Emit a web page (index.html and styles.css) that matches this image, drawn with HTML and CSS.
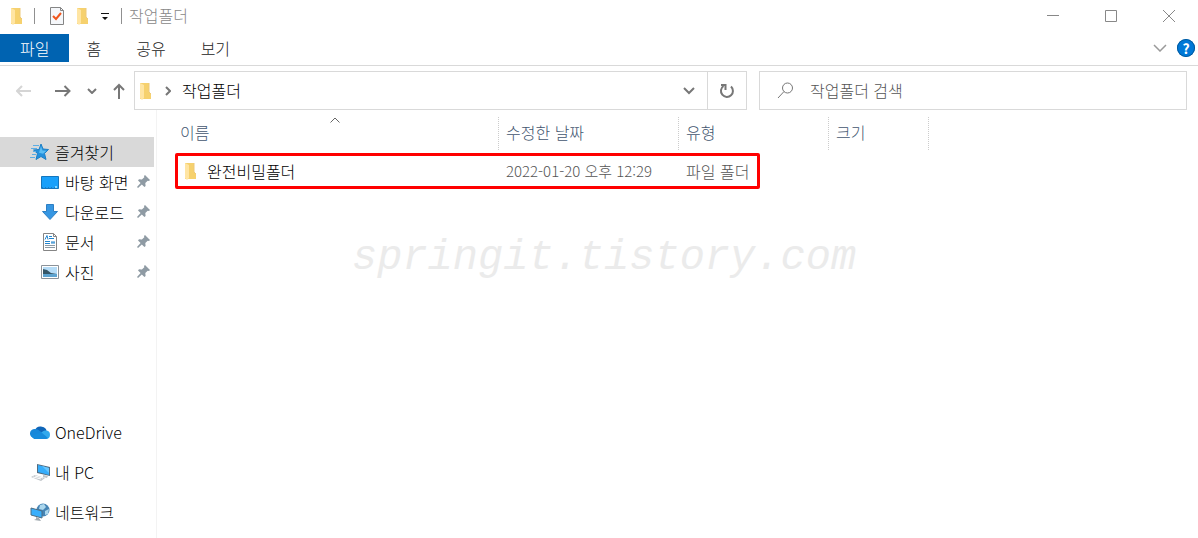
FILE: index.html
```html
<!DOCTYPE html>
<html lang="ko">
<head>
  <meta charset="UTF-8" />
  <title>작업폴더</title>
  <meta name="viewport" content="width=device-width, initial-scale=1.0" />
  <link rel="stylesheet" href="styles.css">
</head>
<body>
  <svg class="symbols" aria-hidden="true">
    <symbol id="folder" viewBox="0 0 14 18">
      <path d="M1 1h9v9l2 2v5H1z" fill="#f6d16e" />
      <path d="M1 1l4 2v13l-2 2-2-2z" fill="#ffe5a3" />
      <path d="M10 1v9l2 2" fill="none" stroke="#edc97a" />
    </symbol>
    <symbol id="pin" viewBox="0 0 13 13">
      <path d="M8 0l5 5-1 1-1.300-.3-2.400 2.400.3 2.900-1.200 1-2.600-2.600L1 13 0 12l3.600-3.900L1 5.500l1-1.200 2.900.3 2.400-2.400L7 1z" fill="#8f9ba4" />
    </symbol>
  </svg>

  <header class="titlebar">
    <svg class="folder"><use href="#folder" /></svg>
    <span class="divider first"></span>
    <button class="quick" aria-label="속성">
      <svg width="16" height="20" viewBox="0 0 16 20">
        <path d="M1.500 1.500h10l3 3v14h-13z" fill="#f5f7fa" stroke="#858585" />
        <path d="M11.500 1.500v3h3" fill="none" stroke="#858585" />
        <path d="M4 10l3 3 5-6" fill="none" stroke="#f0561d" stroke-width="2" />
      </svg>
    </button>
    <button class="quick" aria-label="새 폴더"><svg class="folder"><use href="#folder" /></svg></button>
    <button class="quick" aria-label="빠른 실행 도구 모음 사용자 지정">
      <svg width="8" height="8" viewBox="0 0 8 8"><path d="M0 1h8v1H0zM1 5h6L4 8z" fill="#111" /></svg>
    </button>
    <span class="divider"></span>
    <span class="title">작업폴더</span>
    <div class="controls">
      <button aria-label="최소화"><svg width="12" height="12" viewBox="0 0 12 12"><path d="M0 5.500h12" /></svg></button>
      <button aria-label="최대화"><svg width="12" height="12" viewBox="0 0 12 12"><path d="M.5.5h11v11H.5z" /></svg></button>
      <button aria-label="닫기"><svg width="12" height="12" viewBox="0 0 12 12"><path d="M0 0l12 12M12 0L0 12" /></svg></button>
    </div>
  </header>

  <nav class="ribbon">
    <button class="tab active">파일</button>
    <button class="tab">홈</button>
    <button class="tab">공유</button>
    <button class="tab">보기</button>
    <button class="expand" aria-label="리본 확장">
      <svg width="14" height="8" viewBox="0 0 14 8"><path d="M1 1l6 6 6-6" fill="none" stroke="#9a9a9a" stroke-width="1.500" /></svg>
    </button>
    <button class="help" aria-label="도움말">?</button>
  </nav>

  <div class="toolbar">
    <div class="history">
      <button aria-label="뒤로"><svg width="16" height="12" viewBox="0 0 16 12"><path d="M15 6H1M6 1L1 6l5 5" /></svg></button>
      <button aria-label="앞으로"><svg width="16" height="12" viewBox="0 0 16 12"><path d="M0 6h14M9.500 1l5 5-5 5" /></svg></button>
      <button aria-label="최근 위치"><svg width="10" height="6" viewBox="0 0 10 6"><path d="M1 1l4 4 4-4" /></svg></button>
      <button aria-label="위로"><svg width="12" height="16" viewBox="0 0 12 16"><path d="M6 16V2M1 7l5-5 5 5" /></svg></button>
    </div>
    <div class="address">
      <svg class="folder"><use href="#folder" /></svg>
      <svg class="arrow" width="6" height="10" viewBox="0 0 6 10"><path d="M1 1l4 4-4 4" /></svg>
      <button class="crumb">작업폴더</button>
      <button class="drop" aria-label="이전 위치"><svg width="12" height="8" viewBox="0 0 12 8"><path d="M1 1l5 5 5-5" /></svg></button>
      <button class="refresh" aria-label="새로 고침">
        <svg width="16" height="16" viewBox="0 0 16 16"><path d="M12 3.500a6 6 0 1 1-7.500-.5M2 2h4.500v5" /></svg>
      </button>
    </div>
    <div class="search">
      <label for="search" aria-label="검색">
        <svg width="17" height="17" viewBox="0 0 17 17"><circle cx="10.500" cy="6" r="5" /><path d="M7 9.500L1 16" /></svg>
      </label>
      <input type="text" id="search" placeholder="작업폴더 검색" autocomplete="off" />
    </div>
  </div>

  <div class="content">
    <aside class="sidebar">
      <a class="item selected" href="#">
        <svg class="icon" viewBox="0 0 20 18">
          <path d="M11 1l2 5 5.500.5-4 4 1.500 6-5-3-5 3 1.500-6-4-3.500 5.500-.5z" fill="#2490dc" stroke="#1d7fc6" />
          <path d="M11 3l1.500 4.500 4 .2-3.500 3-4-1z" fill="#5bbdf3" />
          <path d="M3 2.500h6M1 5.500h6M3 8.500h3M2 11.500h4M0 14.500h5" stroke="#5caee5" />
        </svg>즐겨찾기</a>
      <a class="item child" href="#">
        <svg class="icon" viewBox="0 0 20 18"><path d="M1.500 3.500h17v12h-17z" fill="#19a0fa" stroke="#1576bd" /><path d="M2 14.500h14" stroke="#1b7dc6" stroke-dasharray="1 2" /><path d="M15 13h2v2h-2z" fill="#80d4ff" /></svg>
        바탕 화면<svg class="pin"><use href="#pin" /></svg></a>
      <a class="item child" href="#">
        <svg class="icon" viewBox="0 0 20 18"><path d="M6.500 1.500h7v7h4L10 16.500 2.500 8.500h4z" fill="#3696e2" stroke="#2d7fc4" /></svg>
        다운로드<svg class="pin"><use href="#pin" /></svg></a>
      <a class="item child" href="#">
        <svg class="icon" viewBox="0 0 20 18">
          <path d="M3.500.5h10l3 3v14h-13z" fill="#fff" stroke="#858585" /><path d="M13.500.5v3h3" fill="none" stroke="#858585" />
          <path d="M5 6.500l2-4 1 4M9 3.500h3M9 5.500h5M5 8.500h5M5 10.500h5M11 10h4M11 9h4" fill="none" stroke="#2385ce" />
          <path d="M5 12.500h10M5 14.500h10" stroke="#8c9aa5" />
        </svg>
        문서<svg class="pin"><use href="#pin" /></svg></a>
      <a class="item child" href="#">
        <svg class="icon" viewBox="0 0 20 18">
          <path d="M1.500 2.500h17v13h-17z" fill="#fff" stroke="#8b9299" /><path d="M3 4h14v10H3z" fill="#b5dcf7" />
          <path d="M3 6l4 1 4 3 6 1v1H3z" fill="#355768" /><path d="M3 11h14v3H3z" fill="#5da3d0" />
        </svg>
        사진<svg class="pin"><use href="#pin" /></svg></a>

      <div class="places">
        <a class="item" href="#">
          <svg class="icon" viewBox="0 0 20 18">
            <path d="M5 7a6 5 0 0 1 11-1l1 4H5z" fill="#0f65b8" /><path d="M4 15a4 4 0 1 1 1-9c3 0 5 2 7 4l3 5z" fill="#1787d9" />
            <path d="M5 15l7-6c4-3 8-1 8 2.500S18 16 16 16z" fill="#32a9ed" /><path d="M1 13l10-4 7 6-2 1H4z" fill="#168bdc" />
          </svg>OneDrive</a>
        <a class="item" href="#">
          <svg class="icon" viewBox="0 0 20 18">
            <path d="M7 1l13 3v9L7 10z" fill="#526c80" /><path d="M8 2l11 3v7L8 9z" fill="#36adfb" /><path d="M12 2.900l7 2.100v5z" fill="#68c7ff" />
            <path d="M13 12l5 1-1 2-4-1zM1 14l4-2 10 3-4 3z" fill="#c0c5c9" /><path d="M3 14l8 2M5 13l8 2" stroke="#fff" />
          </svg>내 PC</a>
        <a class="item" href="#">
          <svg class="icon" viewBox="0 0 20 18">
            <circle cx="13" cy="7" r="6.500" fill="#4684b4" /><path d="M10 2l4-1 2 3-3 3-4-1zM15 8l4-2-1 5-3 1z" fill="#acd7ed" />
            <path d="M1 5l11 3v7L1 12z" fill="#38aefb" stroke="#4d6c81" /><path d="M6 14v2l-2 1 7 1-2-3z" fill="#a0a9af" />
          </svg>네트워크</a>
      </div>
    </aside>

    <main class="files">
      <table>
        <colgroup>
          <col class="col-name"><col class="col-date"><col class="col-type"><col class="col-size"><col>
        </colgroup>
        <thead>
          <tr>
            <th>이름<svg class="sort" width="10" height="6" viewBox="0 0 10 6"><path d="M.5 5.500L5 1l4.500 4.500" /></svg></th>
            <th>수정한 날짜</th>
            <th>유형</th>
            <th>크기</th>
            <td></td>
          </tr>
        </thead>
        <tbody>
          <tr>
            <td><span class="name"><svg class="folder"><use href="#folder" /></svg>완전비밀폴더</span></td>
            <td class="date">2022-01-20 오후 12:29</td>
            <td class="type">파일 폴더</td>
            <td></td>
            <td></td>
          </tr>
        </tbody>
      </table>
      <div class="highlight"></div>
      <div class="watermark">springit.tistory.com</div>
    </main>
  </div>
</body>
</html>
```
FILE: styles.css
```css
* {
  box-sizing: border-box;
}

body {
  margin: 0;
  min-height: 100vh;
  display: flex;
  flex-direction: column;
  background: #fff;
  color: #000;
  font-family: "Noto Sans CJK KR", sans-serif;
  font-size: 16px;
  font-weight: 300;
  line-height: 24px;
}

button {
  display: flex;
  align-items: center;
  justify-content: center;
  padding: 0;
  border: none;
  background: none;
  color: inherit;
  font: inherit;
}

svg {
  display: block;
  flex: none;
}

.symbols {
  position: absolute;
  width: 0;
  height: 0;
}

.folder {
  width: 14px;
  height: 18px;
}

.titlebar {
  display: flex;
  align-items: center;
  height: 31px;
  padding-left: 10px;
}

.divider {
  width: 1px;
  height: 16px;
  background: #909090;
}

.divider.first {
  margin: 0 2px 0 10px;
}

.quick {
  margin-left: 12px;
}

.quick + .quick {
  margin-left: 11px;
}

.quick + .divider {
  margin-left: 12px;
}

.title {
  margin-left: 7px;
  padding-bottom: 2px;
  color: #888;
}

.controls {
  display: flex;
  margin-left: auto;
}

.controls button {
  width: 58px;
  height: 30px;
}

.controls path {
  fill: none;
  stroke: #888;
}

.ribbon {
  display: flex;
  align-items: center;
  height: 35px;
  padding-top: 3px;
  padding-bottom: 3px;
  border-bottom: 1px solid #d9d9d9;
}

.tab {
  height: 28px;
  padding: 0 18px 0 17px;
  color: #222;
}

.tab.active {
  padding: 0 20px;
  background: #0063b1;
  color: #fff;
}

.expand {
  margin-left: auto;
  margin-right: 10px;
}

.help {
  width: 18px;
  height: 18px;
  margin-right: 3px;
  border-radius: 50%;
  background: #0078d7;
  box-shadow: inset 0 0 0 1px #005a9e;
  color: #fff;
  font-size: 14px;
  font-weight: 700;
}

.toolbar {
  display: flex;
  align-items: center;
  padding: 5px 11px 0 16px;
}

.toolbar path,
.toolbar circle {
  fill: none;
  stroke: #777;
  stroke-width: 2;
}

.history {
  display: flex;
  align-items: center;
  width: 118px;
}

.history button {
  margin-right: 16px;
}

.history button:first-child {
  margin-right: 23px;
}

.toolbar .history button:first-child path {
  stroke: #d5d5d5;
}

.history button:last-child {
  margin: 0;
}

.address,
.search {
  display: flex;
  align-items: center;
  height: 39px;
  border: 1px solid #d9d9d9;
}

.address {
  flex: 1;
  padding-left: 4px;
}

.arrow {
  margin: 0 11px 0 12px;
}

.crumb,
.search input {
  padding: 0 0 2px;
}

.drop {
  margin-left: auto;
  margin-right: 12px;
}

.refresh {
  width: 39px;
  height: 37px;
  border-left: 1px solid #d9d9d9;
}

.search {
  flex: 0 0 428px;
  margin-left: 12px;
  padding-left: 17px;
}

.toolbar .search path,
.toolbar .search circle {
  stroke-width: 1;
}

.search input {
  flex: 1;
  min-width: 0;
  margin-left: 16px;
  border: none;
  outline: none;
  color: #222;
  font: inherit;
}

.search input::placeholder {
  color: #555;
  opacity: 1;
}

.content {
  display: flex;
  flex: 1;
}

.sidebar {
  width: 157px;
  padding: 27px 2px 0 0;
  border-right: 1px solid #f3f3f3;
}

.item {
  display: flex;
  align-items: center;
  gap: 5px;
  height: 30px;
  padding-left: 30px;
  padding-bottom: 1px;
  color: #000;
  text-decoration: none;
}

.item.child {
  padding-left: 40px;
}

.item.selected {
  background: #d9d9d9;
}

.icon {
  width: 20px;
  height: 18px;
}

.pin {
  width: 13px;
  height: 13px;
  margin-left: auto;
  margin-right: 4px;
}

.places {
  margin-top: 125px;
}

.places .item {
  height: 40px;
}

.files {
  position: relative;
  flex: 1;
  padding: 7px 0 0 18px;
}

table {
  width: 100%;
  table-layout: fixed;
  border-collapse: separate;
  border-spacing: 0;
}

.col-name {
  width: 324px;
}

.col-date {
  width: 180px;
}

.col-type {
  width: 150px;
}

.col-size {
  width: 100px;
}

th {
  position: relative;
  height: 33px;
  padding: 0 7px 3px;
  border-right: 1px dotted #ccc;
  color: #43566f;
  font-weight: 300;
  text-align: left;
}

th:first-child {
  padding-left: 5px;
}

.sort {
  position: absolute;
  top: 0;
  left: 155px;
}

.sort path {
  fill: none;
  stroke: #666;
}

tbody td {
  height: 42px;
  padding: 0 7px 1px;
}

.name {
  display: flex;
  align-items: center;
  gap: 9px;
  padding-left: 2px;
}

.date,
.type {
  color: #555;
}

.date {
  font-size: 15px;
}

.highlight {
  position: absolute;
  top: 43px;
  left: 18px;
  width: 585px;
  height: 36px;
  border: 3px solid #f00;
  border-radius: 2px;
}

.watermark {
  position: absolute;
  top: 124px;
  left: 195px;
  color: #ebebeb;
  font-family: "Liberation Mono", monospace;
  font-size: 42px;
  font-style: italic;
  line-height: 48px;
}
```
